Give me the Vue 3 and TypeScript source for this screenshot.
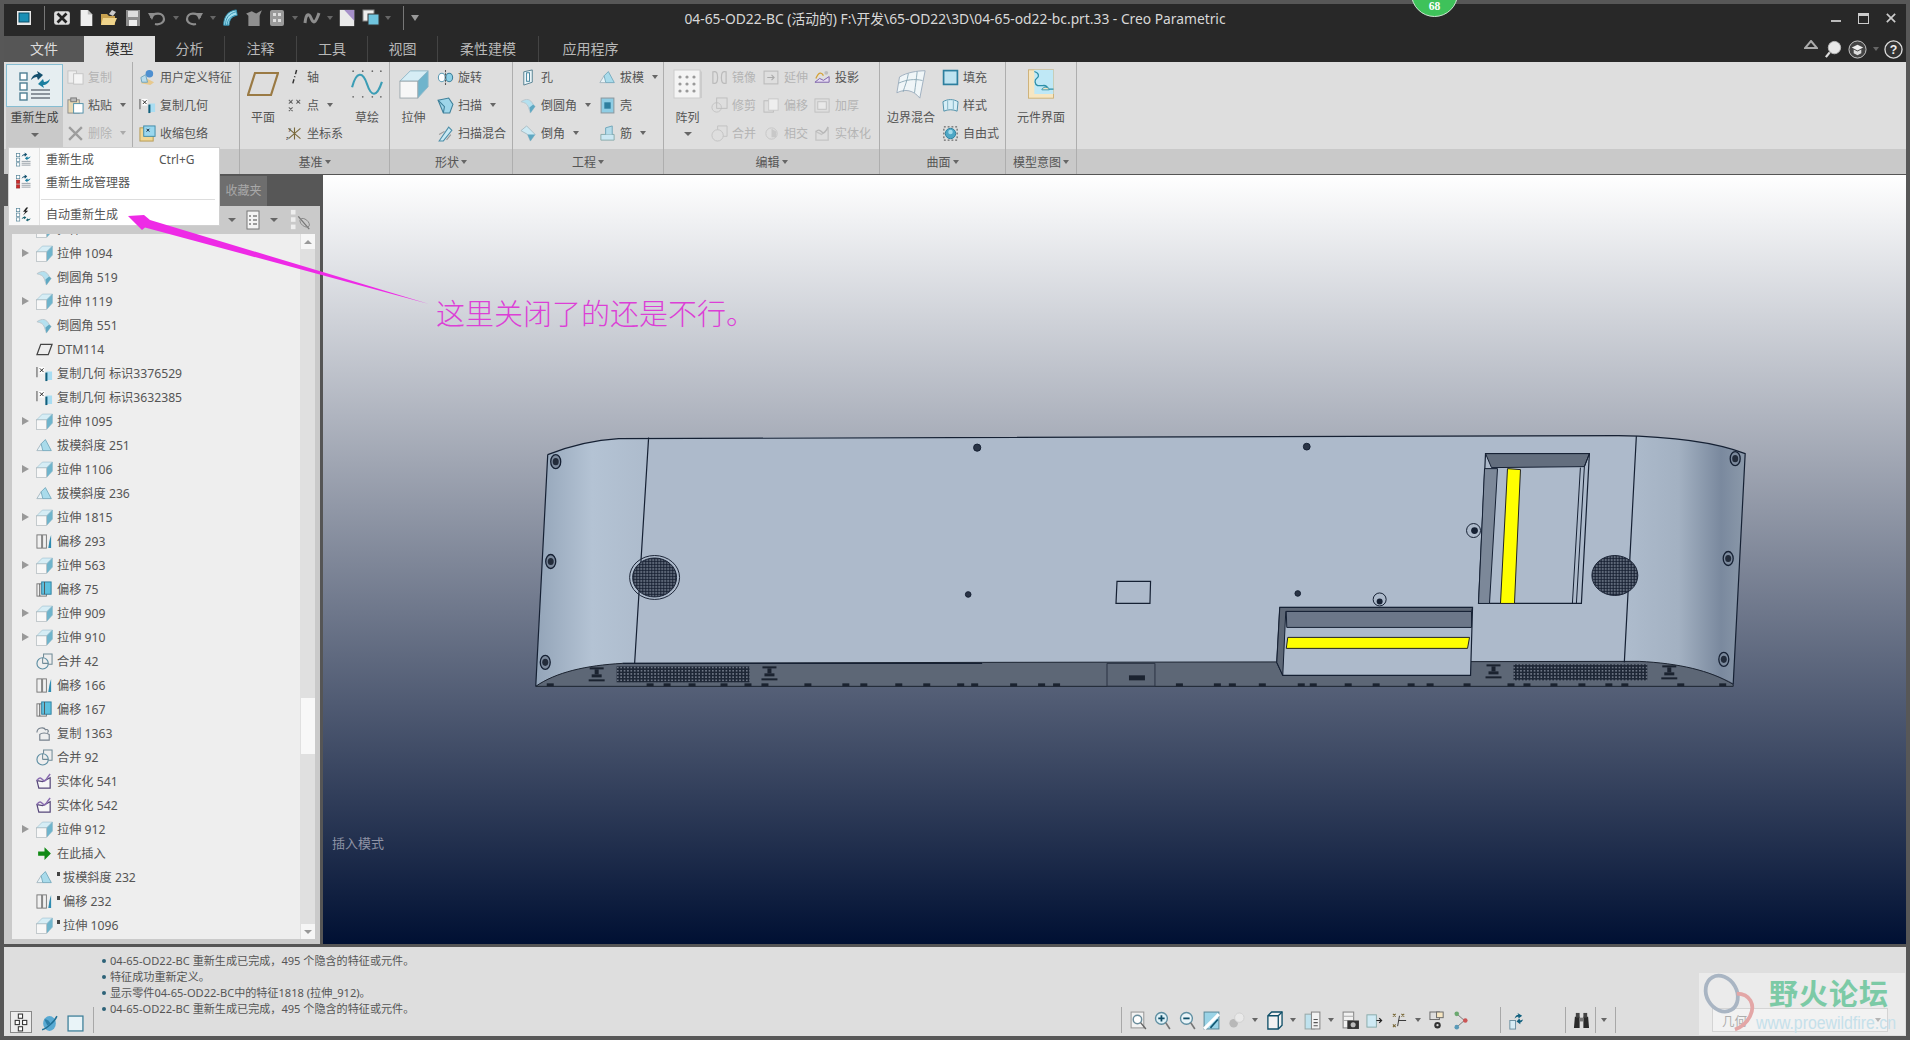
<template>
  <div class="app">
    <!-- 图标 sprite -->
    <svg class="sprite" aria-hidden="true">
      <defs>
        <symbol id="regen" viewBox="0 0 32 30">
          <g fill="#fff" stroke="#4f7f94" stroke-width="1.4"><rect x="1" y="2" width="7" height="7"/><rect x="1" y="12" width="7" height="7"/><rect x="1" y="22" width="7" height="7"/></g>
          <path d="M12 9c1-4 4-6 7-6l-1-3 6 4-5 5-1-3c-2 0-4 1-6 3z" fill="#14506e"/>
          <path d="M31 8c-1 4-4 6-7 6l1 3-6-4 5-5 1 3c2 0 4-1 6-3z" fill="#1a7fa0"/>
          <path d="M12 19h19M12 23h19M12 27h19" stroke="#8b949c" stroke-width="1.8"/>
        </symbol>
        <symbol id="regenmgr" viewBox="0 0 32 30">
          <g fill="#cf2b2b" stroke="#8b2020" stroke-width="1.2"><rect x="1" y="12" width="7" height="7"/><rect x="1" y="22" width="7" height="7"/></g>
          <rect x="1" y="2" width="7" height="7" fill="#fff" stroke="#4f7f94" stroke-width="1.4"/>
          <path d="M12 9c1-4 4-6 7-6l-1-3 6 4-5 5-1-3c-2 0-4 1-6 3z" fill="#14506e"/>
          <path d="M31 8c-1 4-4 6-7 6l1 3-6-4 5-5 1 3c2 0 4-1 6-3z" fill="#1a7fa0"/>
          <path d="M12 19h19M12 23h19M12 27h19" stroke="#8b949c" stroke-width="1.8"/>
        </symbol>
        <symbol id="regenauto" viewBox="0 0 32 30">
          <g fill="#fff" stroke="#4f7f94" stroke-width="1.4"><rect x="1" y="2" width="7" height="7"/><rect x="1" y="12" width="7" height="7"/><rect x="1" y="22" width="7" height="7"/></g>
          <path d="M22 0l-7 9h5l-5 8 11-10h-5l5-7z" fill="#222"/>
          <path d="M12 25c1-3 3-5 6-5l-1-2 5 3-4 4-1-2c-2 0-3 1-5 2zM31 23c-1 3-3 5-6 5l1 2-5-3 4-4 1 2c2 0 3-1 5-2z" fill="#14606e"/>
        </symbol>
        <symbol id="x-box" viewBox="0 0 16 16"><rect x="1" y="2" width="14" height="12" rx="2" fill="#ddd"/><path d="M4 4l8 8M12 4l-8 8" stroke="#222" stroke-width="2.4"/></symbol>
        <symbol id="window" viewBox="0 0 16 16"><rect x="1" y="1" width="14" height="14" fill="#e8e8e8"/><rect x="3" y="3" width="10" height="9" fill="#1b8fb5" stroke="#0a4d66"/></symbol>
        <symbol id="newdoc" viewBox="0 0 16 20"><path d="M2 1h8l5 5v13H2z" fill="#eee"/><path d="M10 1v5h5" fill="#bbb"/></symbol>
        <symbol id="open" viewBox="0 0 18 18"><path d="M1 5h6l2 2h6v9H1z" fill="#c9a250"/><path d="M3 9h14l-3 7H1z" fill="#efd48c"/><path d="M9 5l3-4 4 2-3 4z" fill="#ccc"/></symbol>
        <symbol id="save" viewBox="0 0 16 18"><rect x="1" y="1" width="14" height="16" fill="#8c8c8c"/><rect x="3" y="2" width="10" height="6" fill="#ddd"/><rect x="4" y="11" width="8" height="6" fill="#eee"/></symbol>
        <symbol id="undo" viewBox="0 0 20 16"><path d="M4 8c2-6 13-6 13 1 0 4-5 6-9 5" fill="none" stroke="#8d8d8d" stroke-width="2.2"/><path d="M1 3l7 0-3 7z" fill="#8d8d8d"/></symbol>
        <symbol id="redo" viewBox="0 0 20 16"><path d="M16 8c-2-6-13-6-13 1 0 4 5 6 9 5" fill="none" stroke="#8d8d8d" stroke-width="2.2"/><path d="M19 3l-7 0 3 7z" fill="#8d8d8d"/></symbol>
        <symbol id="qregen" viewBox="0 0 18 20"><path d="M2 18C2 8 7 2 16 1l1 6C11 8 8 12 8 18z" fill="#9fdcec" stroke="#2f8fb0"/><path d="M6 18c0-6 3-9 9-11M4 18C4 10 8 5 16 3" fill="none" stroke="#2f8fb0"/></symbol>
        <symbol id="shirt" viewBox="0 0 16 16"><path d="M1 4l5-2 4 2 5-3-2 5v9H3V6z" fill="#8f8f8f"/></symbol>
        <symbol id="gridbox" viewBox="0 0 16 18"><rect x="1" y="1" width="14" height="16" rx="2" fill="#9a9a9a"/><g fill="#ddd"><rect x="4" y="4" width="3" height="3"/><rect x="9" y="4" width="3" height="3"/><rect x="4" y="10" width="3" height="3"/><rect x="9" y="10" width="3" height="3"/></g></symbol>
        <symbol id="ncurve" viewBox="0 0 18 14"><path d="M2 12C3 2 6 2 8 7s4 7 8-5" fill="none" stroke="#8d8d8d" stroke-width="3"/></symbol>
        <symbol id="purpledoc" viewBox="0 0 18 20"><rect x="1" y="1" width="16" height="18" fill="#e9e9e9"/><path d="M6 1l11 12V1z" fill="#a58fc9"/></symbol>
        <symbol id="wincopy" viewBox="0 0 18 18"><rect x="1" y="1" width="11" height="11" fill="#eee" stroke="#888"/><rect x="6" y="5" width="11" height="11" fill="#6fc4de" stroke="#333"/></symbol>
        <symbol id="copy" viewBox="0 0 18 16"><rect x="1" y="1" width="9" height="13" fill="#eee" stroke="#c4c4c4"/><rect x="7" y="4" width="10" height="11" fill="#f4f4f4" stroke="#c4c4c4"/></symbol>
        <symbol id="paste" viewBox="0 0 18 18"><rect x="1" y="3" width="12" height="14" fill="#e8d9b4" stroke="#8b8b8b"/><rect x="4" y="1" width="6" height="4" fill="#bbb" stroke="#777"/><rect x="7" y="7" width="10" height="10" fill="#fff" stroke="#4f8fa8"/></symbol>
        <symbol id="del" viewBox="0 0 16 16"><path d="M2 2l12 12M14 2L2 14" stroke="#9d9d9d" stroke-width="2.2"/></symbol>
        <symbol id="udf" viewBox="0 0 18 18"><path d="M2 15l4-6 10 5-4 3z" fill="#e7c98e"/><circle cx="11" cy="5" r="4" fill="#4e8fd0"/><path d="M2 9l5-3 2 8H3z" fill="#b9dcec" stroke="#6ea4bc"/></symbol>
        <symbol id="copygeom" viewBox="0 0 18 18"><path d="M1 2v11" stroke="#777" stroke-width="1.4"/><rect x="3" y="2" width="6" height="7" fill="#fff"/><path d="M4 3.5l4 4M8 3.5l-4 4" stroke="#222"/><path d="M11 1v4M11 7h6v9h-6z" fill="#a9ddf2"/><path d="M11 8v9" stroke="#105f7c" stroke-width="2.2"/></symbol>
        <symbol id="shrink" viewBox="0 0 18 18"><rect x="1" y="3" width="14" height="14" fill="#f0d794" stroke="#b59a53"/><rect x="5" y="1" width="12" height="11" fill="#9ad7ee" stroke="#3d8aa8"/><path d="M8 4l3 3M11 4L8 7" stroke="#123"/></symbol>
        <symbol id="plane" viewBox="0 0 32 26"><path d="M8 2h23l-7 22H1z" fill="none" stroke="#9a7a44" stroke-width="2.2"/></symbol>
        <symbol id="axis" viewBox="0 0 16 16"><path d="M10 1L6 15" stroke="#333" stroke-dasharray="4 2 1 2" stroke-width="1.4"/></symbol>
        <symbol id="point" viewBox="0 0 18 16"><g stroke="#666" stroke-width="1.1"><path d="M3 2l4 4M7 2L3 6M11 2l4 4M15 2l-4 4M3 10l4 4M7 10l-4 4"/></g></symbol>
        <symbol id="csys" viewBox="0 0 20 18"><path d="M10 2v14M3 15L17 3M3 3l14 12" stroke="#7a6a3a" stroke-width="1.3"/><text x="0" y="17" font-size="6" fill="#333" font-family="Liberation Sans">z</text><text x="3" y="6" font-size="6" fill="#333" font-family="Liberation Sans">y</text></symbol>
        <symbol id="sketch" viewBox="0 0 30 28"><path d="M1 17C5 2 11 2 15 14s9 13 14-2" fill="none" stroke="#3b9db5" stroke-width="2"/><g fill="#666"><circle cx="2" cy="2" r=".8"/><circle cx="11" cy="2" r=".8"/><circle cx="20" cy="2" r=".8"/><circle cx="28" cy="2" r=".8"/><circle cx="2" cy="26" r=".8"/><circle cx="11" cy="26" r=".8"/><circle cx="20" cy="26" r=".8"/><circle cx="28" cy="26" r=".8"/></g></symbol>
        <symbol id="extrude" viewBox="0 0 32 32"><path d="M1 13L12 2h19L20 13z" fill="#d6edf5" stroke="#8fb7c8"/><path d="M20 13L31 2v17L20 31z" fill="#6fb4cc" stroke="#8fb7c8"/><rect x="1" y="13" width="19" height="18" fill="#f7f7f7" stroke="#9ca7ac"/></symbol>
        <symbol id="revolve" viewBox="0 0 16 16"><ellipse cx="4.5" cy="8" rx="3.2" ry="4" fill="#fff" stroke="#5d9ab3"/><ellipse cx="11.5" cy="8" rx="3.2" ry="4" fill="#8fd0e6" stroke="#3d7f99"/><path d="M8 1v14" stroke="#555" stroke-dasharray="2 1"/></symbol>
        <symbol id="sweep" viewBox="0 0 16 16"><path d="M1 3l10-2 4 6-3 8-6 0z" fill="#9ed6ea" stroke="#3e7f99"/><path d="M1 3l6 6-1 6" fill="none" stroke="#3e7f99"/></symbol>
        <symbol id="sblend" viewBox="0 0 16 16"><path d="M2 15L11 2l3 3L6 15z" fill="#c9e9f4" stroke="#4d8ea8"/><path d="M2 9l5-3M9 14l4-5" stroke="#999"/></symbol>
        <symbol id="hole" viewBox="0 0 16 18"><path d="M3 3l9-2v13l-9 3z" fill="#e9f4f8" stroke="#557f90"/><rect x="6" y="4" width="3" height="9" fill="#fff" stroke="#3d7f99"/></symbol>
        <symbol id="round" viewBox="0 0 18 18"><path d="M1 5c6-4 10-3 13 3l2 2-5 7-2-6C8 7 5 6 1 5z" fill="#b4e0ef" stroke="#b9c6cc"/><path d="M10 11l4-3 2 2-5 7z" fill="#5fa8c2"/></symbol>
        <symbol id="chamfer" viewBox="0 0 18 18"><path d="M1 6l6-5 9 9-5 7-3-7z" fill="#cdeaf4" stroke="#a9bcc4"/><path d="M8 10l8 0-5 7z" fill="#5fa8c2"/></symbol>
        <symbol id="draft" viewBox="0 0 20 16"><path d="M1 14L6 6h6l-4 8z" fill="#e8f3f7" stroke="#9fb4bd"/><path d="M6 6l5-5 7 13H8z" fill="#a9dbeb" stroke="#6fa5b9"/></symbol>
        <symbol id="shell" viewBox="0 0 16 16"><rect x="2" y="1" width="12" height="14" fill="#8fcde4" stroke="#8b9aa1"/><rect x="5" y="5" width="6" height="6" fill="#2f7f9f"/></symbol>
        <symbol id="rib" viewBox="0 0 18 18"><path d="M2 10h14v6H2z" fill="#cce8f3" stroke="#8aa"/><path d="M7 10V3l7-2v9" fill="#b5dcea" stroke="#6fa5b9"/></symbol>
        <symbol id="pattern" viewBox="0 0 30 30"><rect x="1" y="1" width="26" height="28" fill="#f4f4f4" stroke="#ccc"/><path d="M27 1l2 2v26h-2z" fill="#ccc"/><g fill="#9a9a9a"><circle cx="7" cy="8" r="1.6"/><circle cx="14" cy="8" r="1.6"/><circle cx="21" cy="8" r="1.6"/><circle cx="7" cy="15" r="1.6"/><circle cx="14" cy="15" r="1.6"/><circle cx="21" cy="15" r="1.6"/><circle cx="7" cy="22" r="1.6"/><circle cx="14" cy="22" r="1.6"/><circle cx="21" cy="22" r="1.6"/></g></symbol>
        <symbol id="mirror" viewBox="0 0 18 16"><path d="M2 2c4-1 5 1 5 6s-1 7-5 6zM16 2c-4-1-5 1-5 6s1 7 5 6z" fill="none" stroke="#bbb" stroke-width="1.3"/></symbol>
        <symbol id="extend" viewBox="0 0 16 16"><rect x="1" y="2" width="13" height="12" fill="none" stroke="#bbb"/><path d="M4 8h6M8 5.5L10.5 8 8 10.5" stroke="#aaa" fill="none"/></symbol>
        <symbol id="project" viewBox="0 0 18 16"><path d="M1 13l5-4 4 2 6-4v6z" fill="#e6dcf2" stroke="#7a5fa8"/><path d="M2 9c3-7 6-7 8-3" fill="none" stroke="#d4a23a" stroke-width="1.4"/><circle cx="13" cy="3" r="2" fill="#bdbdbd"/></symbol>
        <symbol id="trim" viewBox="0 0 18 18"><circle cx="6" cy="11" r="5" fill="none" stroke="#c2c2c2"/><rect x="6" y="1" width="11" height="11" fill="none" stroke="#bdbdbd"/></symbol>
        <symbol id="offset" viewBox="0 0 18 16"><rect x="1" y="3" width="10" height="12" fill="none" stroke="#bbb"/><rect x="6" y="1" width="10" height="12" fill="#eee" stroke="#c8c8c8"/></symbol>
        <symbol id="thicken" viewBox="0 0 18 16"><rect x="1" y="1" width="15" height="14" fill="none" stroke="#c0c0c0"/><rect x="4" y="4" width="9" height="8" fill="#e8e8e8" stroke="#c0c0c0"/></symbol>
        <symbol id="merge" viewBox="0 0 18 18"><circle cx="7" cy="11" r="6" fill="none" stroke="#c2c2c2"/><path d="M7 5V1h10v11H13" fill="none" stroke="#c2c2c2"/></symbol>
        <symbol id="intersect" viewBox="0 0 18 18"><circle cx="9" cy="9" r="6" fill="none" stroke="#c6c6c6"/><path d="M9 4l5 3v6H9z" fill="#c8c8c8"/></symbol>
        <symbol id="solidify" viewBox="0 0 18 18"><path d="M2 7l6 3 7-6v12H2z" fill="none" stroke="#c4c4c4" stroke-width="1.4"/><path d="M2 7c3-3 5-1 7 1s4-3 6-6" fill="none" stroke="#b8b8b8" stroke-width="1.4"/></symbol>
        <symbol id="bblend" viewBox="0 0 34 34"><path d="M4 9C12 4 24 2 33 2L27 33C20 24 10 22 1 27z" fill="#f0f6f8" stroke="#9ab"/><path d="M14 5c-1 8-4 14-6 21M24 3c-1 9-2 16-3 24M3 16c9-4 18-5 27-3" fill="none" stroke="#88a5b3"/></symbol>
        <symbol id="fill" viewBox="0 0 16 16"><rect x="1.5" y="1.5" width="13" height="13" fill="#bfe3f0" stroke="#2d7f9e" stroke-width="1.6"/></symbol>
        <symbol id="style" viewBox="0 0 18 16"><path d="M2 14L1 4c5-3 11-3 16 0l-1 10c-4-2-10-2-14 0z" fill="#d6eef6" stroke="#4d8ea8"/><path d="M6 3v9M12 3v9" stroke="#7fb2c6"/></symbol>
        <symbol id="freestyle" viewBox="0 0 18 18"><rect x="2" y="2" width="14" height="14" fill="none" stroke="#444" stroke-dasharray="2 2"/><circle cx="9" cy="9" r="5.5" fill="#4ea7c5" stroke="#2d7f9e"/><circle cx="9" cy="7.5" r="2.4" fill="#a4dcec"/></symbol>
        <symbol id="cif" viewBox="0 0 32 36"><rect x="1" y="1" width="30" height="34" fill="#f6e6c2" stroke="#c9ab6b"/><rect x="8" y="1" width="23" height="29" fill="#bfe8f6"/><path d="M8 3c6 2 6 6 3 8s-3 7 1 9h6c4-1 6 2 7 4h6" fill="none" stroke="#2c8fa8" stroke-width="1.5"/><path d="M17 25c0-4 9-4 9 0z" fill="#f6e6c2" stroke="#2c8fa8"/></symbol>
        <symbol id="insert" viewBox="0 0 16 16"><path d="M2 6h6V2l6 6-6 6v-4H2z" fill="#108a15"/></symbol>
        <symbol id="datum" viewBox="0 0 18 14"><path d="M5 1.5h12L13 12.5H1z" fill="none" stroke="#444" stroke-width="1.3"/></symbol>
        <symbol id="off1" viewBox="0 0 18 18"><rect x="1" y="2" width="5" height="14" fill="#f1f1f1" stroke="#777"/><rect x="7" y="2" width="4" height="14" fill="#f1f1f1" stroke="#777"/><path d="M13 16c1-5 1-9 3-14v14z" fill="#2f8bb0"/></symbol>
        <symbol id="off2" viewBox="0 0 18 18"><rect x="1" y="3" width="10" height="13" fill="#f1f1f1" stroke="#777"/><rect x="6" y="1" width="10" height="13" fill="#5dc0de" stroke="#2f7f9f"/><path d="M4 3v13M9 1v13" stroke="#555"/></symbol>
        <symbol id="tmerge" viewBox="0 0 18 18"><circle cx="7" cy="11" r="6" fill="none" stroke="#5d8ea3" stroke-width="1.2"/><path d="M7 11V5M7 11h6M8 5V1h9v11h-4" fill="none" stroke="#6f8a96" stroke-width="1.1"/></symbol>
        <symbol id="tcopy" viewBox="0 0 18 18"><path d="M1 8c0-6 8-6 9-3 3-1 4 2 2 3M4 16v-6c2-2 7-2 10 0v6z" fill="none" stroke="#75808c" stroke-width="1.2"/></symbol>
        <symbol id="tsolid" viewBox="0 0 18 18"><path d="M1 8l6 1 8-4v11H3z" fill="#f6f6f6" stroke="#56477a" stroke-width="1.3"/><path d="M1 8c3-5 5-2 7 0s4-4 7-7" fill="none" stroke="#8a6cb0" stroke-width="1.6"/></symbol>
        <symbol id="fit" viewBox="0 0 16 18"><rect x="1" y="1" width="12" height="15" fill="#f2f2f2" stroke="#999"/><circle cx="7" cy="8" r="4" fill="#fff" stroke="#6b8d9c" stroke-width="1.4"/><path d="M10 11l5 6" stroke="#666" stroke-width="1.4"/></symbol>
        <symbol id="zin" viewBox="0 0 16 18"><circle cx="7" cy="7" r="5.6" fill="#dff1f7" stroke="#5e8ea1" stroke-width="1.3"/><path d="M4 7h6M7 4v6" stroke="#0e4d67" stroke-width="1.7"/><path d="M11 11l4 6" stroke="#777" stroke-width="1.6"/></symbol>
        <symbol id="zout" viewBox="0 0 16 18"><circle cx="7" cy="7" r="5.6" fill="#e9f4f8" stroke="#5e8ea1" stroke-width="1.3"/><path d="M4 7h6" stroke="#0e4d67" stroke-width="1.7"/><path d="M11 11l4 6" stroke="#777" stroke-width="1.6"/></symbol>
        <symbol id="refit" viewBox="0 0 16 18"><rect x="1" y="1" width="14" height="16" fill="#9ad3e6" stroke="#5d8c9d"/><path d="M1 17L15 3" stroke="#fff" stroke-width="3"/><path d="M7 16l7-8" stroke="#0f5570" stroke-width="1.5"/></symbol>
        <symbol id="shade" viewBox="0 0 18 18"><circle cx="6" cy="12" r="4.5" fill="#b8b8b8"/><circle cx="12" cy="6" r="5" fill="#e9e9e9" stroke="#cfcfcf"/></symbol>
        <symbol id="viewbox" viewBox="0 0 18 20"><path d="M2 5l4-4h11v14l-4 4H2z" fill="#f2f2f2" stroke="#0f4f68" stroke-width="1.4"/><path d="M2 5h11v14M13 5l4-4" fill="none" stroke="#0f4f68" stroke-width="1.4"/></symbol>
        <symbol id="layers" viewBox="0 0 16 18"><rect x="1" y="3" width="9" height="14" fill="#bfe2ee" stroke="#9aa"/><rect x="7" y="1" width="8" height="16" fill="#f2f2f2" stroke="#888"/><path d="M9 8h4M9 11h4M9 14h4" stroke="#555"/></symbol>
        <symbol id="camera" viewBox="0 0 16 18"><rect x="1" y="1" width="10" height="15" fill="#f2f2f2" stroke="#888"/><path d="M1 5h10M1 9h10" stroke="#aaa"/><rect x="5" y="9" width="11" height="8" fill="#333"/><circle cx="10.5" cy="13" r="2.4" fill="#bbb"/></symbol>
        <symbol id="pipe" viewBox="0 0 18 18"><rect x="1" y="3" width="10" height="13" fill="#cfeaf4" stroke="#8aa"/><path d="M11 9h5M14 6.5L16.5 9 14 11.5" stroke="#222" fill="none" stroke-width="1.3"/></symbol>
        <symbol id="datums" viewBox="0 0 18 18"><path d="M2 2l3 3M5 2L2 5M11 2l3 3M14 2l-3 3M2 13l3 3M5 13l-3 3" stroke="#7a6a3a" stroke-width="1.1"/><path d="M9 4l-2 11M16 9H8" stroke="#333"/></symbol>
        <symbol id="eyeview" viewBox="0 0 18 20"><rect x="1" y="1" width="10" height="8" fill="none" stroke="#666"/><rect x="8" y="1" width="7" height="6" fill="#f6e6c2" stroke="#666"/><circle cx="9" cy="15" r="3.4" fill="#333"/><circle cx="9" cy="15" r="1.2" fill="#ddd"/></symbol>
        <symbol id="nodes" viewBox="0 0 16 20"><path d="M3 3l8 7-8 7" fill="none" stroke="#777"/><circle cx="3" cy="3" r="2.4" fill="#6aa86f"/><circle cx="12" cy="10" r="2.4" fill="#cc5555"/><circle cx="3" cy="17" r="2.4" fill="#5a9ab8"/></symbol>
        <symbol id="sregen" viewBox="0 0 16 20"><rect x="1" y="10" width="6" height="9" fill="#d8edf5" stroke="#6b8fa0"/><path d="M6 8c1-3 2-4 4-4l-1-2 5 3-4 3V6c-2 0-3 1-4 2zM15 9c-1 2-2 3-3 3v2l-4-3 3-3 1 2z" fill="#0f5f7e"/></symbol>
        <symbol id="binoc" viewBox="0 0 18 18"><path d="M2 5h5v12H1zM11 5h5l1 12h-6z" fill="#2a2a2a"/><rect x="3" y="1" width="4" height="5" fill="#444"/><rect x="11" y="1" width="4" height="5" fill="#444"/><rect x="7" y="6" width="4" height="4" fill="#777"/></symbol>
        <symbol id="treeview" viewBox="0 0 16 18"><rect x="5" y="1" width="4" height="4" fill="#fff" stroke="#333"/><rect x="2" y="7" width="4" height="4" fill="#fff" stroke="#333"/><rect x="9" y="7" width="4" height="4" fill="#fff" stroke="#333"/><rect x="5" y="13" width="4" height="4" fill="#fff" stroke="#333"/></symbol>
        <symbol id="globe" viewBox="0 0 16 18"><ellipse cx="8" cy="9" rx="6" ry="7" fill="#58a9d2"/><path d="M1 15C5 14 13 7 15 2" fill="none" stroke="#1e6e94" stroke-width="1.4"/><path d="M3 5c3 0 5 2 6 4l-3 2z" fill="#2d7fa8"/></symbol>
        <symbol id="blankwin" viewBox="0 0 16 16"><rect x="1" y="1" width="14" height="14" fill="#e9f4f8" stroke="#3d7f99" stroke-width="1.2"/></symbol>
        <symbol id="doclist" viewBox="0 0 16 20"><rect x="2" y="1" width="12" height="18" fill="#f4f4f4" stroke="#777"/><path d="M4 6h2M8 6h4M4 10h2M8 10h4M4 14h2M8 14h4" stroke="#444"/></symbol>
        <symbol id="hideeye" viewBox="0 0 24 24"><g fill="#eee"><rect x="1" y="1" width="5" height="5"/><rect x="1" y="9" width="5" height="5"/><rect x="1" y="17" width="5" height="5"/></g><path d="M9 8l12 14" stroke="#777" stroke-width="1.4"/><ellipse cx="16" cy="15" rx="6" ry="3.6" fill="none" stroke="#888" transform="rotate(40 16 15)"/></symbol>
      </defs>
    </svg>

    <header class="titlebar">
      <div class="qat">
        <svg class="qi qi-win"><use href="#window" /></svg>
        <span class="vsep"></span>
        <template v-for="q in qat" :key="q.key">
          <span v-if="q.icon === 'caret'" class="caret dim"></span>
          <span v-else-if="q.icon === 'sep'" class="vsep thin"></span>
          <svg v-else class="qi" :class="{ wide: q.wide }"><use :href="`#${q.icon}`" /></svg>
        </template>
        <span class="qat-more"></span>
      </div>
      <div class="title">04-65-OD22-BC (活动的) F:\开发\65-OD22\3D\04-65-od22-bc.prt.33 - Creo Parametric</div>
      <div class="winctl">
        <span class="w-min"></span>
        <span class="w-max"></span>
        <svg class="w-close" viewBox="0 0 12 12"><path d="M1 1l10 10M11 1L1 11" stroke="#ccc" stroke-width="2" /></svg>
      </div>
    </header>

    <nav class="tabs">
      <div v-for="t in tabs" :key="t.name" class="tab" :class="t.cls">{{ t.name }}</div>
      <div class="tab-tools">
        <svg class="tt-up" viewBox="0 0 14 10"><path d="M7 1l6 7H1z" fill="none" stroke="#aaa" stroke-width="2" /></svg>
        <svg class="tt-ic" viewBox="0 0 20 20"><circle cx="11" cy="8" r="6.5" fill="#e8e8e8" stroke="#bbb" /><path d="M6 13l-4 5" stroke="#ddd" stroke-width="2.4" /></svg>
        <svg class="tt-ic" viewBox="0 0 20 20"><circle cx="10" cy="10" r="9" fill="#444" stroke="#ccc" /><path d="M4 8l6-3 6 3-6 3z" fill="#eee" /><path d="M6 10v4l4 2 4-2v-4l-4 2z" fill="#ddd" /></svg>
        <span class="caret dim"></span>
        <svg class="tt-ic" viewBox="0 0 20 20"><circle cx="10" cy="10" r="9" fill="#333" stroke="#ddd" stroke-width="1.4" /><text x="10" y="15" text-anchor="middle" font-size="13" font-weight="700" fill="#eee" font-family="Liberation Sans">?</text></svg>
      </div>
    </nav>

    <section class="ribbon">
      <div v-for="g in groups" :key="g.cls" class="group" :class="g.cls">
        <div class="group-body">
          <div v-if="g.regen" class="regen-btn">
            <div class="regen-top"><svg class="regen-ic"><use href="#regen" /></svg></div>
            <div class="regen-bot"><span>重新生成</span><span class="caret"></span></div>
          </div>
          <template v-for="c in g.cols" :key="c.key">
            <div v-if="c.big" class="big" :class="c.cls">
              <svg class="big-ic"><use :href="`#${c.big}`" /></svg>
              <span class="big-label">{{ c.label }}</span>
              <span v-if="c.arrow" class="caret big-caret"></span>
            </div>
            <div v-else class="col" :class="c.cls">
              <div v-for="i in c.rows" :key="i.label" class="item" :class="{ off: i.off }">
                <svg class="ic"><use :href="`#${i.icon}`" /></svg>
                <span>{{ i.label }}</span>
                <span v-if="i.arrow" class="caret"></span>
              </div>
            </div>
          </template>
        </div>
        <!-- 前两组的名称被下拉菜单盖住，截图里看不到 -->
        <div class="group-name"><template v-if="g.name">{{ g.name }}<span class="caret"></span></template></div>
      </div>
      <div class="ribbon-rest"><div class="group-body"></div><div class="group-name"></div></div>
    </section>

    <main class="main">
      <aside class="nav">
        <div class="nav-tabs"><span class="nav-tab">收藏夹</span></div>
        <div class="nav-tools">
          <span class="caret"></span>
          <svg class="nt-doc"><use href="#doclist" /></svg>
          <span class="caret"></span>
          <svg class="nt-eye"><use href="#hideeye" /></svg>
        </div>
        <div class="tree-wrap">
          <div class="tree">
            <div v-for="(r, idx) in rows" :key="idx" class="row">
              <span class="tri" :class="{ on: r.exp }"></span>
              <svg class="row-ic"><use :href="`#${r.icon}`" /></svg>
              <span v-if="r.mark" class="mark"></span>
              <span class="row-label">{{ r.label }}</span>
            </div>
          </div>
          <div class="scroll">
            <span class="sb-btn"><i class="tri-up"></i></span>
            <span class="sb-thumb"></span>
            <span class="sb-btn"><i class="tri-down"></i></span>
          </div>
        </div>
      </aside>

      <div class="view">
        <svg class="model" viewBox="323 174 1583 770">
          <defs>
            <linearGradient id="wingL" x1="0" x2="1" y1="0" y2="0"><stop offset="0" stop-color="#93a4b8" /><stop offset=".5" stop-color="#b4c3d4" /><stop offset="1" stop-color="#adbbcc" /></linearGradient>
            <linearGradient id="wingR" x1="0" x2="1" y1="0" y2="0"><stop offset="0" stop-color="#aebccd" /><stop offset=".45" stop-color="#a3b1c2" /><stop offset=".8" stop-color="#7a899e" /><stop offset="1" stop-color="#8b99aa" /></linearGradient>
            <pattern id="vent" width="3.4" height="3.2" patternUnits="userSpaceOnUse"><rect width="3.4" height="3.2" fill="#1e2736" /><circle cx="1.7" cy="1.6" r=".8" fill="#8f98a6" /></pattern>
            <pattern id="mesh" width="3" height="3" patternUnits="userSpaceOnUse"><rect width="3" height="3" fill="#1b2436" /><circle cx="1.5" cy="1.5" r=".8" fill="#bcc7d6" /></pattern>
          </defs>
          <!-- 主体 -->
          <path d="M648 437L1132 436 1637 436 1625 662 634 663z" fill="#adbacb" />
          <path d="M547 454C575 443 600 439 618 438L648 437 634 663 622 663C585 667 555 672 535 686z" fill="url(#wingL)" />
          <path d="M1637 436C1680 436 1720 443 1746 453L1734 683C1710 670 1680 663 1625 661z" fill="url(#wingR)" />
          <path d="M535 686C555 672 585 665 622 663L982 662 1640 661C1680 663 1710 670 1734 684L1734 686 535 686z" fill="#5d6776" stroke="#1b2330" />
          <path d="M547 454C575 443 600 439 618 438L1619 435C1680 436 1720 443 1746 453L1734 684M547 454L535 686M648 437L634 663M1637 436L1625 662M622 663H982" fill="none" stroke="#152033" stroke-width="1.2" />
          <!-- 通风孔 -->
          <rect x="616" y="666" width="133" height="16" fill="url(#vent)" />
          <rect x="1514" y="664" width="134" height="16" fill="url(#vent)" />
          <g fill="#1b2330">
            <rect v-for="b in blobs" :key="b" :x="b" y="683" width="7" height="3" />
            <rect x="1129" y="675" width="16" height="5" />
            <g v-for="h in hmarks" :key="h[0]" :transform="`translate(${h[0]} ${h[1]})`"><rect x="-7" y="-7" width="14" height="2" /><rect x="-2" y="-5" width="4" height="5" /><rect x="-5" y="0" width="10" height="3" /><rect x="-8" y="5" width="16" height="2" /></g>
          </g>
          <!-- 扬声器孔 -->
          <g>
            <ellipse cx="654" cy="577" rx="25" ry="22" fill="none" stroke="#1b2436" />
            <ellipse cx="654" cy="577" rx="22" ry="19.5" fill="url(#mesh)" stroke="#1b2436" />
            <ellipse cx="1615.5" cy="575" rx="23" ry="20" fill="url(#mesh)" stroke="#1b2436" />
          </g>
          <!-- 螺丝孔 -->
          <g v-for="s in screws" :key="s[0]">
            <ellipse :cx="s[0]" :cy="s[1]" rx="5" ry="7" fill="#7b899c" stroke="#152033" stroke-width="1.3" />
            <ellipse :cx="s[0]" :cy="s[1]" rx="3" ry="3.6" fill="#232c3b" />
          </g>
          <g fill="#2a3446" stroke="#152033">
            <circle cx="977" cy="447" r="3.6" />
            <circle cx="968" cy="594" r="2.8" />
            <circle cx="1307" cy="446" r="3.4" />
            <circle cx="1298" cy="593" r="2.8" />
            <circle cx="1368" cy="632" r="3.2" />
            <circle cx="1499" cy="541" r="2.8" />
          </g>
          <g fill="none" stroke="#152033">
            <circle cx="1380" cy="599" r="6.5" />
            <circle cx="1474" cy="530" r="7" />
          </g>
          <g fill="#152033"><circle cx="1380" cy="601" r="3" /><circle cx="1475" cy="530" r="3.4" /></g>
          <path d="M1117 581H1150.6L1150 603H1116z" fill="none" stroke="#152033" stroke-width="1.2" />
          <path d="M1107 663h48v23h-48z" fill="none" stroke="#2a3343" />
          <!-- 右上开口 -->
          <path d="M1486 453L1590 453 1582 603 1479 603z" fill="#adbacb" stroke="#152033" stroke-width="1.2" />
          <path d="M1486 453L1590 453 1585 466 1492 467z" fill="#636e7e" stroke="#152033" />
          <path d="M1485 468L1498 468 1490 603 1479 603z" fill="#7c8899" stroke="#152033" />
          <path d="M1508 468L1521 469 1515 603 1501 603z" fill="#ffff00" stroke="#222" />
          <path d="M1581 467L1573 603M1590 453L1585 466M1585 466L1577 603" fill="none" stroke="#152033" />
          <!-- 下方开口 -->
          <path d="M1280 607L1473 607 1471 675 1283 675 1277 662z" fill="#adbacb" stroke="#152033" stroke-width="1.2" />
          <path d="M1280 607L1473 607 1472 611 1286 611 1283 675 1277 662z" fill="#5d6776" stroke="#152033" />
          <path d="M1286.5 611H1472L1472 627H1287z" fill="#6c7789" stroke="#152033" />
          <path d="M1288 637H1470L1468 648H1286.5z" fill="#ffff00" stroke="#222" />
        </svg>
        <div class="insert-mode">插入模式</div>
      </div>
    </main>

    <footer class="status">
      <div class="st-left">
        <span class="st-active"><svg class="st-ic"><use href="#treeview" /></svg></span>
        <svg class="st-ic"><use href="#globe" /></svg>
        <svg class="st-ic"><use href="#blankwin" /></svg>
        <span class="st-sep"></span>
      </div>
      <ul class="msgs">
        <li v-for="(m, idx) in messages" :key="idx">{{ m }}</li>
      </ul>
      <div class="st-tools">
        <span class="st-sep"></span>
        <template v-for="(t, idx) in viewTools" :key="idx">
          <span v-if="t === 'caret'" class="caret"></span>
          <svg v-else class="st-ic"><use :href="`#${t}`" /></svg>
        </template>
        <span class="st-sep far-a"></span>
        <svg class="st-ic"><use href="#sregen" /></svg>
        <span class="st-sep far-b"></span>
        <svg class="st-ic"><use href="#binoc" /></svg>
        <span class="st-sep pull-3"></span>
        <span class="caret pull-2"></span>
        <span class="st-sep"></span>
        <div class="combo"><span>几何</span><span class="caret"></span></div>
      </div>
    </footer>

    <!-- 以下是盖在界面上的内容 -->
    <div class="badge">68</div>

    <div class="menu">
      <div class="m-row"><svg class="m-ic"><use href="#regen" /></svg><span class="m-text">重新生成</span><span class="m-key">Ctrl+G</span></div>
      <div class="m-row"><svg class="m-ic"><use href="#regenmgr" /></svg><span class="m-text">重新生成管理器</span></div>
      <div class="m-line"></div>
      <div class="m-row"><svg class="m-ic"><use href="#regenauto" /></svg><span class="m-text">自动重新生成</span></div>
    </div>

    <svg class="callout" viewBox="0 0 1910 1040">
      <path d="M128 216L144 215 150 220 429 304 145 227.5 142 230z" fill="#ee2ae6" />
    </svg>
    <div class="note">这里关闭了的还是不行。</div>

    <div class="watermark">
      <svg class="wm-logo" viewBox="0 0 70 70">
        <ellipse cx="22" cy="24" rx="16" ry="20" fill="none" stroke="#a9b5c3" stroke-width="4" transform="rotate(-30 22 24)" />
        <path d="M38 24C52 24 58 36 52 48 48 56 42 60 36 62" fill="none" stroke="#e3a6a6" stroke-width="4" />
      </svg>
      <span class="wm-name">野火论坛</span>
      <span class="wm-url">www.proewildfire.cn</span>
    </div>
  </div>
</template>

<script setup lang="ts">
type Item = { icon: string; label: string; arrow?: boolean; off?: boolean }
type Col = { key: string; big?: string; label?: string; arrow?: boolean; rows?: Item[]; cls?: string }
type Group = { name: string; cls: string; regen?: boolean; cols: Col[] }

const qat = [
  { key: 'x', icon: 'x-box' },
  { key: 'new', icon: 'newdoc' },
  { key: 'open', icon: 'open' },
  { key: 'save', icon: 'save' },
  { key: 'undo', icon: 'undo', wide: true },
  { key: 'a1', icon: 'caret' },
  { key: 'redo', icon: 'redo', wide: true },
  { key: 'a2', icon: 'caret' },
  { key: 'reg', icon: 'qregen' },
  { key: 'shirt', icon: 'shirt' },
  { key: 'grid', icon: 'gridbox' },
  { key: 'a3', icon: 'caret' },
  { key: 'n', icon: 'ncurve' },
  { key: 'a4', icon: 'caret' },
  { key: 'pd', icon: 'purpledoc' },
  { key: 'wc', icon: 'wincopy' },
  { key: 'a5', icon: 'caret' },
  { key: 's', icon: 'sep' },
]

const tabs = [
  { name: '文件', cls: 't-file' },
  { name: '模型', cls: 't-on' },
  { name: '分析', cls: 't-70' },
  { name: '注释', cls: 't-72' },
  { name: '工具', cls: 't-71' },
  { name: '视图', cls: 't-70' },
  { name: '柔性建模', cls: 't-101' },
  { name: '应用程序', cls: 't-111' },
]

const groups: Group[] = [
  {
    name: '',
    cls: 'g-ops',
    regen: true,
    cols: [
      {
        key: 'c1',
        cls: 'ops-col',
        rows: [
          { icon: 'copy', label: '复制', off: true },
          { icon: 'paste', label: '粘贴', arrow: true },
          { icon: 'del', label: '删除', arrow: true, off: true },
        ],
      },
    ],
  },
  {
    name: '',
    cls: 'g-data',
    cols: [
      {
        key: 'c1',
        cls: 'data-col',
        rows: [
          { icon: 'udf', label: '用户定义特征' },
          { icon: 'copygeom', label: '复制几何' },
          { icon: 'shrink', label: '收缩包络' },
        ],
      },
    ],
  },
  {
    name: '基准',
    cls: 'g-datum',
    cols: [
      { key: 'plane', big: 'plane', label: '平面', cls: 'w-46' },
      {
        key: 'c1',
        cls: 'w-datum',
        rows: [
          { icon: 'axis', label: '轴' },
          { icon: 'point', label: '点', arrow: true },
          { icon: 'csys', label: '坐标系' },
        ],
      },
      { key: 'sk', big: 'sketch', label: '草绘', cls: 'w-34' },
    ],
  },
  {
    name: '形状',
    cls: 'g-shape',
    cols: [
      { key: 'ext', big: 'extrude', label: '拉伸', cls: 'w-47' },
      {
        key: 'c1',
        rows: [
          { icon: 'revolve', label: '旋转' },
          { icon: 'sweep', label: '扫描', arrow: true },
          { icon: 'sblend', label: '扫描混合' },
        ],
      },
    ],
  },
  {
    name: '工程',
    cls: 'g-eng',
    cols: [
      {
        key: 'c1',
        cls: 'w-eng',
        rows: [
          { icon: 'hole', label: '孔' },
          { icon: 'round', label: '倒圆角', arrow: true },
          { icon: 'chamfer', label: '倒角', arrow: true },
        ],
      },
      {
        key: 'c2',
        rows: [
          { icon: 'draft', label: '拔模', arrow: true },
          { icon: 'shell', label: '壳' },
          { icon: 'rib', label: '筋', arrow: true },
        ],
      },
    ],
  },
  {
    name: '编辑',
    cls: 'g-edit',
    cols: [
      { key: 'pat', big: 'pattern', label: '阵列', arrow: true, cls: 'w-47' },
      {
        key: 'c1',
        cls: 'w-52',
        rows: [
          { icon: 'mirror', label: '镜像', off: true },
          { icon: 'trim', label: '修剪', off: true },
          { icon: 'merge', label: '合并', off: true },
        ],
      },
      {
        key: 'c2',
        cls: 'w-51',
        rows: [
          { icon: 'extend', label: '延伸', off: true },
          { icon: 'offset', label: '偏移', off: true },
          { icon: 'intersect', label: '相交', off: true },
        ],
      },
      {
        key: 'c3',
        rows: [
          { icon: 'project', label: '投影' },
          { icon: 'thicken', label: '加厚', off: true },
          { icon: 'solidify', label: '实体化', off: true },
        ],
      },
    ],
  },
  {
    name: '曲面',
    cls: 'g-surf',
    cols: [
      { key: 'bb', big: 'bblend', label: '边界混合', cls: 'w-62' },
      {
        key: 'c1',
        rows: [
          { icon: 'fill', label: '填充' },
          { icon: 'style', label: '样式' },
          { icon: 'freestyle', label: '自由式' },
        ],
      },
    ],
  },
  {
    name: '模型意图',
    cls: 'g-intent',
    cols: [{ key: 'cif', big: 'cif', label: '元件界面', cls: 'w-full' }],
  },
]

type Row = { icon: string; label: string; exp?: boolean; mark?: boolean }

const rows: Row[] = [
  { icon: 'extrude', label: '拉伸', exp: true },
  { icon: 'extrude', label: '拉伸 1094', exp: true },
  { icon: 'round', label: '倒圆角 519' },
  { icon: 'extrude', label: '拉伸 1119', exp: true },
  { icon: 'round', label: '倒圆角 551' },
  { icon: 'datum', label: 'DTM114' },
  { icon: 'copygeom', label: '复制几何 标识3376529' },
  { icon: 'copygeom', label: '复制几何 标识3632385' },
  { icon: 'extrude', label: '拉伸 1095', exp: true },
  { icon: 'draft', label: '拔模斜度 251' },
  { icon: 'extrude', label: '拉伸 1106', exp: true },
  { icon: 'draft', label: '拔模斜度 236' },
  { icon: 'extrude', label: '拉伸 1815', exp: true },
  { icon: 'off1', label: '偏移 293' },
  { icon: 'extrude', label: '拉伸 563', exp: true },
  { icon: 'off2', label: '偏移 75' },
  { icon: 'extrude', label: '拉伸 909', exp: true },
  { icon: 'extrude', label: '拉伸 910', exp: true },
  { icon: 'tmerge', label: '合并 42' },
  { icon: 'off1', label: '偏移 166' },
  { icon: 'off2', label: '偏移 167' },
  { icon: 'tcopy', label: '复制 1363' },
  { icon: 'tmerge', label: '合并 92' },
  { icon: 'tsolid', label: '实体化 541' },
  { icon: 'tsolid', label: '实体化 542' },
  { icon: 'extrude', label: '拉伸 912', exp: true },
  { icon: 'insert', label: '在此插入' },
  { icon: 'draft', label: '拔模斜度 232', mark: true },
  { icon: 'off1', label: '偏移 232', mark: true },
  { icon: 'extrude', label: '拉伸 1096', mark: true },
]

const messages = [
  '04-65-OD22-BC 重新生成已完成，495 个隐含的特征或元件。',
  '特征成功重新定义。',
  '显示零件04-65-OD22-BC中的特征1818 (拉伸_912)。',
  '04-65-OD22-BC 重新生成已完成，495 个隐含的特征或元件。',
]

const viewTools = [
  'fit', 'zin', 'zout', 'refit', 'shade', 'caret', 'viewbox', 'caret',
  'layers', 'caret', 'camera', 'pipe', 'datums', 'caret', 'eyeview', 'nodes',
]

// 底边上的小缺口，x 坐标
const blobs = [
  546, 646, 663, 688, 720, 744, 761, 804, 842, 860, 895, 923, 957, 971, 1010, 1038, 1053,
  1176, 1214, 1229, 1259, 1298, 1310, 1345, 1373, 1408, 1427, 1464, 1508, 1524, 1551, 1579,
  1606, 1622, 1678, 1720,
]
const hmarks = [[596, 674], [769, 673], [1494, 671], [1670, 672]]
const screws = [[555, 461], [550, 561], [544.5, 662], [1736, 458], [1729, 558], [1724.6, 659]]
</script>

<style>
html,
body {
  margin: 0;
  background: #555;
}
</style>

<style scoped>
.app {
  position: relative;
  width: 1910px;
  height: 1040px;
  box-sizing: border-box;
  padding: 4px;
  background: #575757;
  overflow: hidden;
  display: flex;
  flex-direction: column;
  font-family: "Noto Sans", "Noto Sans CJK SC", sans-serif;
  font-size: 12px;
  color: #555;
}
.sprite {
  position: absolute;
  width: 0;
  height: 0;
}
.caret {
  display: inline-block;
  flex: none;
  width: 0;
  height: 0;
  border-left: 4px solid transparent;
  border-right: 4px solid transparent;
  border-top: 4px solid #666;
}
.caret.dim {
  border-left-width: 3.5px;
  border-right-width: 3.5px;
  border-top-color: #666;
}

/* title bar */
.titlebar {
  flex: none;
  height: 32px;
  background: #282828;
  display: grid;
  grid-template-columns: 1fr auto 1fr;
  align-items: center;
  padding-bottom: 4px;
  box-sizing: border-box;
}
.qat {
  display: flex;
  align-items: center;
  gap: 5.5px;
  padding-left: 12px;
}
.qi {
  width: 18px;
  height: 18px;
  flex: none;
}
.qi.wide {
  width: 20px;
}
.qi-win {
  width: 16px;
  height: 16px;
}
.vsep {
  width: 1px;
  height: 24px;
  background: #777;
  margin: 0 3px 0 6px;
}
.vsep.thin {
  margin: 0 0 0 6px;
}
.qat-more {
  width: 0;
  height: 0;
  margin-left: 2px;
  border-left: 4px solid transparent;
  border-right: 4px solid transparent;
  border-top: 6px solid #999;
}
.title {
  color: #d8d8d8;
  font-size: 13.8px;
  white-space: nowrap;
}
.winctl {
  display: flex;
  justify-content: flex-end;
  align-items: center;
  gap: 17px;
  padding-right: 10px;
}
.w-min {
  width: 10px;
  height: 2px;
  background: #bbb;
  margin-top: 6px;
}
.w-max {
  width: 9px;
  height: 7px;
  border: 1px solid #ccc;
  border-top-width: 3px;
}
.w-close {
  width: 10px;
  height: 10px;
}

/* tabs */
.tabs {
  flex: none;
  height: 26px;
  background: #282828;
  display: flex;
}
.tab {
  width: 70px;
  box-sizing: border-box;
  border-right: 1px solid #444;
  color: #b8b8b8;
  font-size: 14px;
  line-height: 26px;
  text-align: center;
}
.t-file {
  width: 80px;
  background: #565656;
  color: #ddd;
  border: 0;
}
.t-on {
  width: 71px;
  background: #dedede;
  color: #333;
  border: 0;
}
.t-71 {
  width: 71px;
}
.t-72 {
  width: 72px;
}
.t-101 {
  width: 101px;
}
.t-111 {
  width: 103px;
  border: 0;
}
.tab-tools {
  margin-left: auto;
  display: flex;
  align-items: center;
  gap: 5.5px;
  padding-right: 3px;
}
.tt-up {
  width: 14px;
  height: 10px;
  margin-bottom: 8px;
}
.tt-ic {
  width: 19px;
  height: 19px;
}

/* ribbon */
.ribbon {
  flex: none;
  height: 113px;
  display: flex;
  border-bottom: 1px solid #555;
  box-sizing: border-box;
  background: #dedede;
}
.group {
  display: flex;
  flex-direction: column;
  border-right: 1px solid #aeaeae;
  box-sizing: border-box;
}
.group-body {
  height: 87px;
  display: flex;
  box-sizing: border-box;
}
.group-name {
  flex: 1;
  background: #c9c9c9;
  display: flex;
  align-items: center;
  justify-content: center;
  gap: 2px;
  color: #555;
}
.group-name .caret {
  border-left-width: 3px;
  border-right-width: 3px;
}
.ribbon-rest {
  flex: 1;
  display: flex;
  flex-direction: column;
}
.g-ops {
  width: 129px;
}
.g-data {
  width: 107px;
}
.g-datum {
  width: 150px;
}
.g-shape {
  width: 123px;
}
.g-eng {
  width: 151px;
}
.g-edit {
  width: 216px;
}
.g-surf {
  width: 126px;
}
.g-intent {
  width: 71px;
}
.regen-btn {
  width: 57px;
  margin-left: 2px;
  display: flex;
  flex-direction: column;
  flex: none;
}
.regen-top {
  height: 43px;
  margin-top: 2px;
  box-sizing: border-box;
  background: #e6eef1;
  border: 1px solid #86bdd2;
  display: flex;
  align-items: center;
  justify-content: center;
}
.regen-ic {
  width: 32px;
  height: 30px;
}
.regen-bot {
  flex: 1;
  background: #c9c9c9;
  display: flex;
  flex-direction: column;
  align-items: center;
  gap: 7px;
  padding-top: 1px;
  color: #444;
}
.col {
  display: flex;
  flex-direction: column;
  padding-top: 1px;
}
.ops-col {
  margin-left: 4px;
}
.data-col {
  margin-left: 6px;
}
.w-datum {
  width: 64px;
}
.w-eng {
  width: 79px;
  margin-left: 7px;
}
.w-52 {
  width: 52px;
}
.w-51 {
  width: 51px;
}
.item {
  height: 28px;
  display: flex;
  align-items: center;
  gap: 4px;
  white-space: nowrap;
}
.item .caret {
  margin-left: 4px;
  border-left-width: 3.5px;
  border-right-width: 3.5px;
}
.item.off {
  color: #b4b4b4;
}
.item.off .caret {
  border-top-color: #aaa;
}
.ic {
  width: 17px;
  height: 17px;
  flex: none;
}
.big {
  flex: none;
  display: flex;
  flex-direction: column;
  align-items: center;
  padding-top: 7px;
  box-sizing: border-box;
}
.big-ic {
  width: 32px;
  height: 30px;
}
.big-label {
  margin-top: 9px;
  color: #555;
}
.big-caret {
  margin-top: 6px;
}
.w-46 {
  width: 46px;
}
.w-47 {
  width: 47px;
}
.w-34 {
  width: 34px;
}
.w-62 {
  width: 62px;
}
.w-full {
  width: 70px;
}

/* navigator */
.main {
  flex: 1;
  min-height: 0;
  display: flex;
}
.nav {
  flex: none;
  width: 319px;
  display: flex;
  flex-direction: column;
  background: #cacaca;
  border-right: 3px solid #555;
  box-sizing: border-box;
}
.nav-tabs {
  height: 31px;
  background: #575757;
  display: flex;
  justify-content: flex-end;
  padding: 1px 53px 0 0;
  box-sizing: border-box;
}
.nav-tab {
  width: 47px;
  background: #6e6e6e;
  color: #a8a8a8;
  line-height: 30px;
  text-align: center;
}
.nav-tools {
  height: 28px;
  display: flex;
  align-items: center;
  justify-content: flex-end;
  gap: 9px;
  padding-right: 8px;
}
.nt-doc {
  width: 16px;
  height: 20px;
}
.nt-eye {
  width: 22px;
  height: 22px;
  margin-left: 3px;
}
.tree-wrap {
  height: 705px;
  margin: 0 5px 0 8px;
  background: #eeeeee;
  display: flex;
  overflow: hidden;
}
.tree {
  flex: 1;
  min-width: 0;
  margin-top: -17px;
}
.row {
  height: 24px;
  display: flex;
  align-items: center;
  font-size: 12.2px;
  color: #555;
  white-space: nowrap;
}
.tri {
  width: 8px;
  height: 0;
  margin: 0 6px 0 10px;
  box-sizing: border-box;
}
.tri.on {
  width: 0;
  border-top: 4.5px solid transparent;
  border-bottom: 4.5px solid transparent;
  border-left: 7px solid #999;
  margin-right: 7px;
}
.row-ic {
  width: 17px;
  height: 17px;
  margin-right: 4px;
  flex: none;
}
.mark {
  width: 3px;
  height: 4px;
  background: #444;
  margin: -7px 3px 0 0;
}
.scroll {
  flex: none;
  width: 15px;
  background: #e0e0e0;
  display: flex;
  flex-direction: column;
  align-items: center;
}
.sb-btn {
  flex: none;
  width: 14px;
  height: 15px;
  background: #f6f6f6;
  display: flex;
  align-items: center;
  justify-content: center;
}
.sb-btn:last-child {
  margin-top: auto;
}
.sb-thumb {
  width: 14px;
  height: 56px;
  margin-top: 449px;
  background: #f8f8f8;
}
.tri-up,
.tri-down {
  width: 0;
  height: 0;
  border-left: 4px solid transparent;
  border-right: 4px solid transparent;
}
.tri-up {
  border-bottom: 4px solid #999;
}
.tri-down {
  border-top: 4px solid #999;
}

/* viewport */
.view {
  flex: 1;
  min-width: 0;
  position: relative;
  background: linear-gradient(#ffffff, #001033);
}
.model {
  position: absolute;
  inset: 0;
  width: 100%;
  height: 100%;
}
.insert-mode {
  position: absolute;
  left: 9px;
  top: 658px;
  color: #8f93a5;
  font-size: 13px;
}

/* status bar */
.status {
  flex: none;
  height: 92px;
  box-sizing: border-box;
  border-top: 3px solid #555;
  background: #dedede;
  display: flex;
}
.st-left {
  flex: none;
  width: 90px;
  box-sizing: border-box;
  padding: 0 0 3px 6px;
  display: flex;
  align-items: flex-end;
  gap: 9px;
}
.st-active {
  width: 20px;
  height: 20px;
  border: 1px solid #888;
  background: #ececec;
  display: flex;
  align-items: center;
  justify-content: center;
}
.st-ic {
  width: 17px;
  height: 19px;
  flex: none;
}
.st-sep {
  flex: none;
  width: 1px;
  height: 26px;
  background: #a8a8a8;
}
.msgs {
  list-style: none;
  margin: 0;
  padding: 6px 0 0 8px;
  font-size: 11.1px;
  line-height: 16px;
  color: #555;
}
.msgs li {
  position: relative;
  padding-left: 8px;
  white-space: nowrap;
}
.msgs li::before {
  content: "";
  position: absolute;
  left: 0;
  top: 6px;
  width: 4px;
  height: 4px;
  border-radius: 50%;
  background: #2d6278;
}
.st-tools {
  margin-left: auto;
  padding: 0 18px 3px 0;
  display: flex;
  align-items: center;
  align-self: flex-end;
  gap: 7.5px;
}
.st-tools .caret {
  border-left-width: 3.5px;
  border-right-width: 3.5px;
}
.far-a {
  margin-left: 22px;
}
.far-b {
  margin-left: 32px;
}
.pull-3 {
  margin-left: -3px;
}
.pull-2 {
  margin-left: -2px;
}
.combo {
  width: 176px;
  height: 24px;
  margin-left: 89px;
  box-sizing: border-box;
  border: 1px solid #aaa;
  background: #eee;
  display: flex;
  align-items: center;
  justify-content: space-between;
  padding: 0 6px 0 9px;
  font-size: 12.5px;
}

/* overlays */
.badge {
  position: absolute;
  left: 1411px;
  top: -30px;
  width: 45px;
  height: 41px;
  padding-bottom: 4px;
  box-sizing: content-box;
  border: 1.5px solid #cfe9d4;
  border-radius: 50%;
  background: #3ec25a;
  color: #fff;
  font-family: "Liberation Serif", serif;
  font-size: 11.5px;
  font-weight: 700;
  line-height: 12px;
  display: flex;
  align-items: flex-end;
  justify-content: center;
}
.menu {
  position: absolute;
  left: 8px;
  top: 147px;
  width: 212px;
  height: 79px;
  box-sizing: border-box;
  background-color: #fff;
  border: 1px solid #d0d0d0;
  background-image: linear-gradient(90deg, #f8f8f8 30px, #e2e2e2 30px, #e2e2e2 31px, transparent 31px);
  color: #555;
}
.m-row {
  height: 22.5px;
  display: flex;
  align-items: center;
}
.m-ic {
  width: 15px;
  height: 15px;
  margin: 0 15px 0 7px;
  flex: none;
}
.m-text {
  flex: 1;
  font-size: 12px;
}
.m-key {
  width: 60px;
  font-size: 12px;
}
.m-line {
  height: 1px;
  margin: 6px 4px 3px 32px;
  background: #ddd;
}
.callout {
  position: absolute;
  inset: 0;
  width: 100%;
  height: 100%;
  pointer-events: none;
}
.note {
  position: absolute;
  left: 436px;
  top: 295px;
  color: #dc3fd6;
  font-size: 29px;
  font-weight: 300;
  line-height: 38px;
  white-space: nowrap;
}
.watermark {
  position: absolute;
  left: 1699px;
  top: 973px;
  width: 206px;
  height: 62px;
  background: rgba(245, 245, 245, 0.55);
  pointer-events: none;
}
.wm-logo {
  position: absolute;
  left: 2px;
  top: -2px;
  width: 66px;
  height: 66px;
}
.wm-name {
  position: absolute;
  left: 70px;
  top: 2px;
  color: #7ccaa6;
  font-size: 29px;
  font-weight: 700;
  line-height: 38px;
  letter-spacing: 1px;
  white-space: nowrap;
}
.wm-url {
  position: absolute;
  left: 57px;
  top: 38px;
  color: #c5e0ea;
  font-size: 18px;
  line-height: 24px;
  white-space: nowrap;
  font-family: "Liberation Sans", sans-serif;
  transform: scaleX(0.88);
  transform-origin: left center;
}
</style>
